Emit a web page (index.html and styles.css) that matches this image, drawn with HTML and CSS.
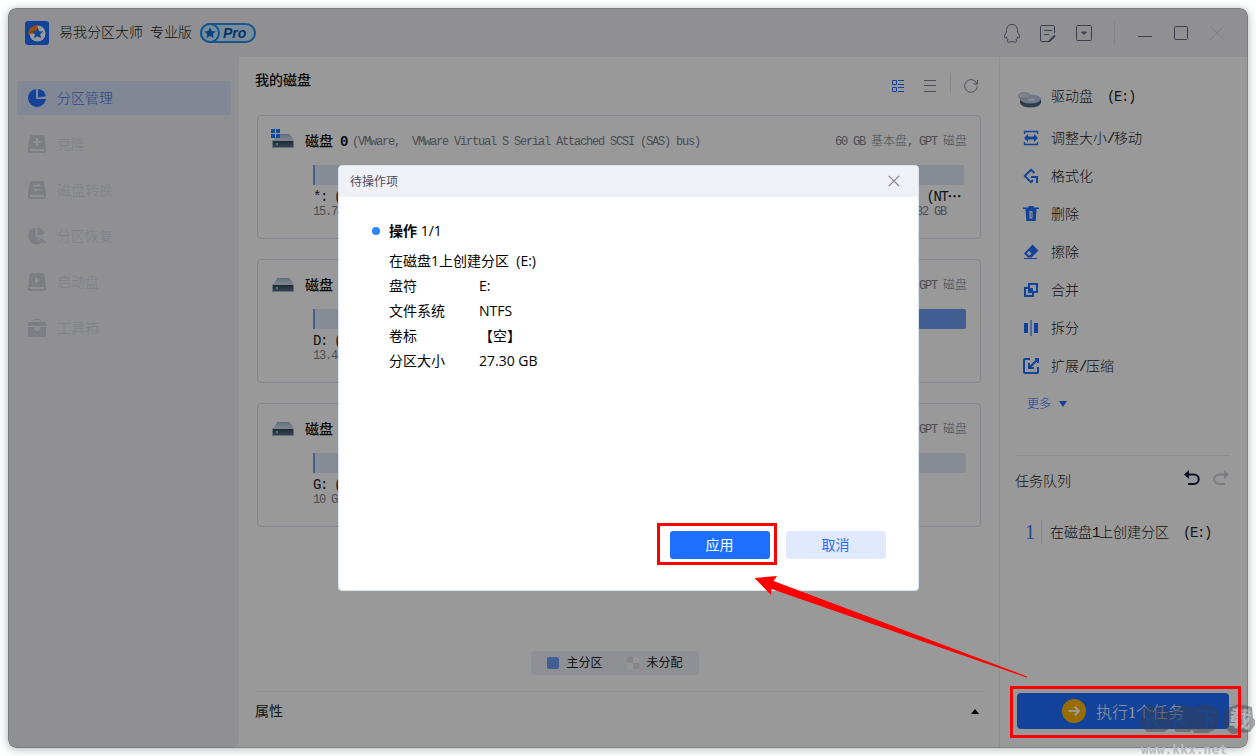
FILE: index.html
```html
<!DOCTYPE html>
<html lang="zh-CN">
	<head>
		<meta charset="utf-8">
		<title>易我分区大师</title>
		<meta name="viewport" content="width=device-width">
		<link rel="stylesheet" href="styles.css">
	</head>
	<body>
		<svg class="defs" width="0" height="0">
			<defs>
				<linearGradient id="lid" x1="0" y1="0" x2="0" y2="1">
					<stop offset="0" stop-color="#9fb4d0"/>
					<stop offset="1" stop-color="#d9e5f7"/>
				</linearGradient>
				<linearGradient id="box" x1="0" y1="0" x2="0" y2="1">
					<stop offset="0" stop-color="#34455c"/>
					<stop offset="1" stop-color="#5c6f8b"/>
				</linearGradient>
				<symbol id="drive" viewBox="0 0 24 22">
					<path d="M6.500 6h12l4.500 6.500H2z" fill="url(#lid)"/>
					<path d="M1 12.500h22V20H1z" fill="#a9b8cf"/>
					<path d="M2 13h20v6H2z" fill="url(#box)"/>
					<path d="M5 15h2v2H5z" fill="#7be07b"/>
				</symbol>
			</defs>
		</svg>

		<div class="window">
			<header class="titlebar">
				<svg class="logo" width="24" height="24" viewBox="0 0 24 24">
					<rect width="24" height="24" rx="3" fill="#1e6fff"/>
					<circle cx="12.500" cy="12.500" r="8" fill="#fff"/>
					<path d="M3 13a9.500 9.500 0 0 1 9.500-9v5L9 12.500z" fill="#ff7f00"/>
					<path d="M12.500 6.500l1.700 3.700 4 .4-3 2.700.9 4-3.600-2.100L9 17.300l.9-4-3-2.700 4-.4z" fill="#1e6fff"/>
				</svg>
				<h1>易我分区大师<i class="gap"></i>专业版</h1>
				<div class="pro">
					<svg width="20" height="20" viewBox="0 0 20 20">
						<circle cx="10" cy="10" r="9" fill="#c9eaff" stroke="#178cf5" stroke-width="2"/>
						<path d="M10 4.300l1.700 3.600 4 .5-2.900 2.700.7 3.900L10 13.100 6.500 15l.7-3.900-2.900-2.700 4-.5z" fill="#0a6fd6"/>
					</svg>
					<span>Pro</span>
				</div>
				<div class="tools">
					<svg width="24" height="24" viewBox="0 0 24 24">
						<path d="M12 3.500c-3.500 0-5.500 2.500-5.500 6v1.500c-1.300 1.800-2.200 3.700-2 5.700.8.300 1.400-.1 2-.7.300 1.200.8 2 1.500 2.800-1 .7-1 2.200.5 2.200h2c.8 0 1.200-.4 1.500-1 .3.600.7 1 1.500 1h2c1.500 0 1.500-1.500.5-2.200.7-.8 1.200-1.600 1.500-2.800.6.600 1.200 1 2 .7.200-2-.7-3.900-2-5.700V9.500c0-3.500-2-6-5.500-6z"/>
					</svg>
					<svg width="24" height="24" viewBox="0 0 24 24">
						<path d="M18.500 12V5.500a1 1 0 0 0-1-1h-12a1 1 0 0 0-1 1v14a1 1 0 0 0 1 1H13M8 9.500h8M8 13.500h5"/>
						<path d="M13 20.500l6-6" stroke-width="2"/>
					</svg>
					<svg width="24" height="24" viewBox="0 0 24 24">
						<rect x="4.500" y="4.500" width="15" height="15" rx="1"/>
						<path d="M9.500 11h5L12 13.500z" fill="#666a80"/>
					</svg>
					<span class="line"></span>
					<svg width="24" height="24" viewBox="0 0 24 24"><path d="M5 15.500h14"/></svg>
					<svg width="24" height="24" viewBox="0 0 24 24"><rect x="5.500" y="5.500" width="13" height="13" rx="1"/></svg>
					<svg class="off" width="24" height="24" viewBox="0 0 24 24"><path d="M5 5l14 14M19 5L5 19"/></svg>
				</div>
			</header>

			<div class="body">
				<nav class="sidebar">
					<a class="item active">
						<svg width="18" height="18" viewBox="0 0 18 18">
							<path d="M8 0v10h10A9 9 0 1 1 8 0z"/>
							<path d="M10 0a9 9 0 0 1 8 7.300L10 8.500z"/>
						</svg>分区管理
					</a>
					<a class="item">
						<svg width="18" height="18" viewBox="0 0 18 18">
							<path d="M3.500 0h11q1.500 0 1.700 1.500L18 13v3q0 2-2 2H2q-2 0-2-2v-3L1.800 1.500Q2 0 3.500 0z"/>
							<path class="cut" d="M8 3h2v3h3v2h-3v3H8V8H5V6h3zM2 14h14v2H2z"/>
						</svg>克隆
					</a>
					<a class="item">
						<svg width="18" height="18" viewBox="0 0 18 18">
							<path d="M3.500 0h11q1.500 0 1.700 1.500L18 13v3q0 2-2 2H2q-2 0-2-2v-3L1.800 1.500Q2 0 3.500 0z"/>
							<path class="cut" d="M5 4h5V2l3.500 3.500H5zM13 9.500H8.500v2L5 8h8zM2 14h14v2H2z"/>
						</svg>磁盘转换
					</a>
					<a class="item">
						<svg width="19" height="18" viewBox="0 0 19 18">
							<path d="M8 0v10h4l-2 3 3 4A9 9 0 1 1 8 0z"/>
							<path d="M10 0a9 9 0 0 1 7.500 6.500L10 8.500zM11 14l4-4v2.500q3.500.5 4 5-1.500-2-4-2V18z"/>
						</svg>分区恢复
					</a>
					<a class="item">
						<svg width="18" height="18" viewBox="0 0 18 18">
							<path d="M3.500 0h11q1.500 0 1.700 1.500L18 13v3q0 2-2 2H2q-2 0-2-2v-3L1.800 1.500Q2 0 3.500 0z"/>
							<path class="cut" d="M7 4l5 3-5 3.500zM2 14h14v2H2z"/>
						</svg>启动盘
					</a>
					<a class="item">
						<svg width="18" height="18" viewBox="0 0 18 18">
							<path d="M5 3V1.500Q5 0 6.500 0h5Q13 0 13 1.500V3h3.500Q18 3 18 4.500V7H0V4.500Q0 3 1.500 3zM6 3h6V1H6z" fill-rule="evenodd"/>
							<path d="M0 8h6q0 4 3 4t3-4h6v8.500q0 1.500-1.500 1.500h-15Q0 18 0 16.500z"/>
						</svg>工具箱
					</a>
				</nav>

				<main class="content">
					<div class="heading">
						<h2>我的磁盘</h2>
						<div class="views">
							<svg class="on" width="12" height="12" viewBox="0 0 12 12"><path d="M.5.500h4v4h-4zM.5 7.500h4v4h-4zM6 .500h6M6 4.500h6M6 7.500h6M6 11.500h6"/></svg>
							<svg width="12" height="12" viewBox="0 0 12 12"><path d="M0 .500h12M0 5.500h12M0 11.500h12"/></svg>
							<span class="line"></span>
							<svg width="14" height="14" viewBox="0 0 14 14"><path d="M12.800 4.500A6.300 6.300 0 1 0 13.300 7M13.500 1v4H9.500"/></svg>
						</div>
					</div>

					<section class="disk">
						<div class="disk-head">
							<svg class="drive" width="24" height="22"><use href="#drive"/><path d="M0 1h4v4H0zM5 1h4v4H5zM0 6h4v4H0zM5 6h4v4H5z" fill="#1e7bff"/></svg>
							<b>磁盘<i class="gap"></i><span class="mono">0</span></b>
							<span class="mono small model">(VMware,&nbsp; VMware Virtual S Serial Attached SCSI (SAS) bus)</span>
							<span class="meta"><span class="mono small">60 GB </span>基本盘<span class="mono small">, GPT </span>磁盘</span>
						</div>
						<div class="parts">
							<div class="part first">
								<div class="bar"></div>
								<p class="mono">*: (其他)</p>
								<p class="mono small size">15.74 MB</p>
							</div>
							<div class="part last">
								<div class="bar"></div>
								<p class="mono">(NT<b>⋯</b></p>
								<p class="mono small size">32 GB</p>
							</div>
						</div>
					</section>

					<section class="disk">
						<div class="disk-head">
							<svg class="drive" width="24" height="22"><use href="#drive"/></svg>
							<b>磁盘<i class="gap"></i><span class="mono">1</span></b>
							<span class="meta"><span class="mono small">GPT </span>磁盘</span>
						</div>
						<div class="parts wide">
							<div class="part first">
								<div class="bar"></div>
								<p class="mono">D: (NTFS)</p>
								<p class="mono small size">13.43 GB</p>
							</div>
							<div class="part last">
								<div class="bar used"></div>
							</div>
						</div>
					</section>

					<section class="disk">
						<div class="disk-head">
							<svg class="drive" width="24" height="22"><use href="#drive"/></svg>
							<b>磁盘<i class="gap"></i><span class="mono">2</span></b>
							<span class="meta"><span class="mono small">GPT </span>磁盘</span>
						</div>
						<div class="parts wide">
							<div class="part first">
								<div class="bar"></div>
								<p class="mono">G: (NTFS)</p>
								<p class="mono small size">10 GB</p>
							</div>
							<div class="part last">
								<div class="bar"></div>
							</div>
						</div>
					</section>

					<div class="legend">
						<i class="swatch primary"></i><span>主分区</span>
						<i class="swatch free"></i><span>未分配</span>
					</div>
					<footer class="props">
						<span>属性</span>
						<svg width="8" height="5" viewBox="0 0 8 5"><path d="M4 0l4 5H0z"/></svg>
					</footer>
				</main>

				<aside class="panel">
					<div class="target">
						<svg width="24" height="16" viewBox="0 0 24 16">
							<path d="M2 6v5q2 4.500 10.500 4.500T23 11V6z" fill="url(#box)"/>
							<ellipse cx="12.500" cy="7" rx="10.500" ry="4.500" fill="#b7c8e0"/>
							<ellipse cx="13" cy="7.500" rx="4" ry="1.500" fill="#d9e5f7"/>
							<path d="M0 4q1-3.500 6-3.500t6 3V6H1z" fill="#d5dbe6" stroke="#9aa4b5" stroke-width=".6"/>
						</svg>
						<span>驱动盘<span class="mono">&nbsp; (E:)</span></span>
					</div>
					<ul class="actions">
						<li>
							<svg width="16" height="16" viewBox="0 0 16 16"><path d="M1.500 4V1.500h13V4M1.500 12v2.500h13V12" class="thin"/><path class="fill" d="M1 8l4-4v2.500h6V4l4 4-4 4V9.500H5V12z"/></svg><span>调整大小<span class="mono">/</span>移动</span>
						</li>
						<li>
							<svg width="16" height="16" viewBox="0 0 16 16"><path d="M11.500 5L8 1.800 1.800 8 8 14.200 10 12.200M14 15V9H8"/></svg>格式化
						</li>
						<li>
							<svg width="16" height="16" viewBox="0 0 16 16"><path class="fill" fill-rule="evenodd" d="M5 1.500Q5 0 6.500 0h3Q11 0 11 1.500h5V3h-2.500l-.8 12H3.300L2.500 3H0V1.500zM6.500 5v7.500h3V5zM7.700 6.200h.8v5h-.8z"/></svg>删除
						</li>
						<li>
							<svg width="16" height="16" viewBox="0 0 16 16"><path class="fill" fill-rule="evenodd" d="M9.500.500l6 6-7 7H5L1 9.500zM6 7L3.800 9.300l2.500 2.500L8.600 9.500zM1 14h13v1H1z"/></svg>擦除
						</li>
						<li>
							<svg width="16" height="16" viewBox="0 0 16 16"><path d="M6 2h8v8H6zM10 10V14H2V6h4"/><path class="fill" d="M6 6h4v4H6z"/></svg>合并
						</li>
						<li>
							<svg width="16" height="16" viewBox="0 0 16 16"><path d="M2 4h2v8H2zM12 4h2v8h-2z"/><path d="M8 0v16" opacity=".55" stroke-width="2"/></svg>拆分
						</li>
						<li>
							<svg width="16" height="16" viewBox="0 0 16 16"><path d="M7 1H2Q1 1 1 2v12q0 1 1 1h12q1 0 1-1V9M15 5V1h-3M14 2L6.500 9.500M6 5v5h5"/></svg><span>扩展<span class="mono">/</span>压缩</span>
						</li>
					</ul>
					<div class="more">更多<svg width="8" height="6" viewBox="0 0 8 6"><path d="M0 0h8L4 6z"/></svg></div>
					<div class="queue">
						<h3>任务队列</h3>
						<svg class="undo" width="16" height="16" viewBox="0 0 16 16"><path d="M3 4.500h7a4.700 4.700 0 0 1 0 9.500H4" /><path class="head" d="M0 4.500L5 0v9z"/></svg>
						<svg class="redo" width="16" height="16" viewBox="0 0 16 16"><path d="M13 4.500H6A4.700 4.700 0 0 0 6 14h6" /><path class="head" d="M16 4.500L11 0v9z"/></svg>
					</div>
					<div class="task">
						<span class="num">1</span>
						<span class="desc">在磁盘<span class="mono">1</span>上创建分区<span class="mono">&nbsp; (E:)</span></span>
					</div>
					<button class="run" type="button">
						<svg width="24" height="24" viewBox="0 0 24 24"><circle cx="12" cy="12" r="12" fill="#ffb500"/><path d="M6.500 12H17M12.500 7.500L17 12l-4.500 4.500" fill="none" stroke="#fff" stroke-width="2"/></svg>
						<span>执行<span class="one">1</span>个任务</span>
					</button>
				</aside>
			</div>
			<div class="mask"></div>
		</div>

		<div class="dialog">
			<div class="dialog-head">
				<span>待操作项</span>
				<svg width="12" height="12" viewBox="0 0 12 12"><path d="M.8.800l10.400 10.400M11.200.800L.8 11.200"/></svg>
			</div>
			<div class="dialog-body">
				<h4>操作 <span>1/1</span></h4>
				<p>在磁盘1上创建分区&nbsp; (E:)</p>
				<dl>
					<dt>盘符</dt><dd>E:</dd>
					<dt>文件系统</dt><dd>NTFS</dd>
					<dt>卷标</dt><dd>【空】</dd>
					<dt>分区大小</dt><dd>27.30 GB</dd>
				</dl>
			</div>
			<div class="dialog-foot">
				<button class="ok" type="button">应用</button>
				<button class="cancel" type="button">取消</button>
			</div>
		</div>

		<div class="watermark">
			<svg width="116" height="34" viewBox="0 0 116 34">
				<path d="M2 10l9-7 8 4 4-3 9 6 1 15-8 5H8l-7-8zM33 9l10-6 12 3 3 16-7 8H37l-6-10zM52 6l16-4 12 6-1 18-10 5H55l-5-9zM86 7l14-5 13 3 1 11 4 4-7 10-18 2-9-8z"/>
			</svg>
			<div class="letters"><i>K</i><i>K</i><i>下</i><b>载</b></div>
			<span>www.kkx.net</span>
		</div>
		<div class="mark mark-apply"></div>
		<div class="mark mark-run"></div>
		<svg class="arrow" width="276" height="104" viewBox="0 0 276 104"><path d="M.500 3L23 1l-3.500 5 253.500 95.500-.5 1L17.500 14l-.5 6z"/></svg>
	</body>
</html>
```

FILE: styles.css
```css
* {
	box-sizing: border-box;
}

body {
	margin: 0;
	width: 1256px;
	height: 756px;
	padding: 8px;
	overflow: hidden;
	position: relative;
	background: #fdfefe;
	color: #333;
	font-family: "Liberation Sans", "Noto Sans CJK SC", sans-serif;
	font-size: 14px;
	line-height: 18px;
}

h1, h2, h3, h4, p, ul, dl, dd {
	margin: 0;
	padding: 0;
}

svg {
	display: block;
	flex: none;
}

.defs {
	position: absolute;
}

/* half-width latin next to full-width characters */
.mono {
	font-family: "Liberation Mono", "Noto Sans CJK SC", monospace;
	font-size: 14px;
	letter-spacing: -1.4px;
	white-space: pre;
}

.mono.small {
	font-size: 12px;
	letter-spacing: -1.2px;
}

.gap {
	display: inline-block;
	width: 7px;
}

.window {
	position: relative;
	display: flex;
	flex-direction: column;
	width: 1240px;
	height: 740px;
	background: #f0f1f5;
	border-radius: 8px;
	overflow: hidden;
	box-shadow: 0 1px 8px rgba(0, 0, 0, 0.3);
}

.mask {
	position: absolute;
	top: 0;
	left: 0;
	width: 100%;
	height: 100%;
	background: rgba(0, 0, 0, 0.4);
	border: 1px solid rgba(80, 84, 92, 0.35);
	border-radius: 8px;
}

/* title bar */
.titlebar {
	display: flex;
	align-items: center;
	height: 49px;
	padding: 1px 19px 0 17px;
}

.titlebar h1 {
	margin: -2px 9px 0 10px;
	font-size: 14px;
	font-weight: 300;
	color: #222;
	width: 132px;
	white-space: nowrap;
}

.pro {
	display: flex;
	align-items: center;
	width: 56px;
	height: 20px;
	border: 2px solid #2d8cf0;
	border-radius: 10px;
	background: #c9eaff;
}

.pro svg {
	margin-left: -2px;
}

.pro span {
	margin-left: 3px;
	font-family: "Liberation Sans", sans-serif;
	font-size: 14px;
	font-style: italic;
	font-weight: bold;
	line-height: 16px;
	color: #0a55b5;
}

.tools {
	display: flex;
	align-items: center;
	gap: 12px;
	margin-left: auto;
}

.tools svg {
	fill: none;
	stroke: #666a80;
}

.tools .off {
	opacity: 0.15;
}

.tools .line {
	width: 1px;
	height: 24px;
	margin: 0 6px;
	background: #d7deee;
}

.body {
	display: flex;
	flex: 1;
	min-height: 0;
	background: #fff;
}

/* left menu */
.sidebar {
	display: flex;
	flex-direction: column;
	gap: 12px;
	width: 231px;
	padding: 24px 8px 0 9px;
	background: #f0f1f5;
	border-bottom-right-radius: 8px;
}

.item {
	display: flex;
	align-items: center;
	gap: 11px;
	height: 34px;
	padding-left: 11px;
	border-radius: 4px;
	font-weight: 300;
	color: #d3d7e3;
}

.item svg {
	width: 18px;
	fill: #d0d1dd;
}

.item .cut {
	fill: #f0f1f5;
}

.item.active {
	background: #d7e2f9;
	color: #4a79e8;
}

.item.active svg {
	fill: #1e6fff;
}

/* disks */
.content {
	display: flex;
	flex-direction: column;
	width: 760px;
	padding: 0 18px;
}

.heading {
	display: flex;
	height: 58px;
	padding-top: 14px;
	margin-left: -2px;
}

.heading h2 {
	font-size: 14px;
	font-weight: 500;
	color: #111;
}

.views {
	display: flex;
	align-items: center;
	gap: 20px;
	height: 30px;
	margin-left: auto;
	padding-right: 3px;
}

.views svg {
	fill: none;
	stroke: #7c8090;
}

.views .on {
	stroke: #1e6fff;
}

.views .line {
	width: 1px;
	height: 20px;
	margin: -6px -7px 0 -6px;
	background: #e4e7ee;
}

.disk {
	height: 124px;
	margin-bottom: 20px;
	border: 1px solid #dbe1ec;
	border-radius: 4px;
}

.disk-head {
	display: flex;
	align-items: center;
	height: 49px;
	padding: 2px 13px 0;
}

.disk-head .drive {
	margin-top: -6px;
}

.disk-head b {
	margin: 0 5px 0 10px;
	font-weight: 500;
	color: #111;
}

.disk-head b .mono {
	font-weight: bold;
}

.model,
.meta {
	color: #7d8289;
}

.meta {
	margin-left: auto;
	font-size: 12px;
	font-weight: 300;
}

.parts {
	display: flex;
	justify-content: space-between;
	width: 651px;
	margin-left: 55px;
	color: #222;
}

.parts.wide {
	width: 653px;
}

.parts p {
	line-height: 16px;
}

.parts .mono:not(.small) {
	margin-top: 4px;
}

.parts p.size {
	line-height: 14px;
	color: #7d8289;
}

.bar {
	height: 20px;
	background: #e1e8f8;
}

.first {
	width: 300px;
}

.first .bar {
	border-left: 2px solid #6d9ef5;
}

.last {
	width: 300px;
	text-align: right;
}

.last p {
	padding-right: 4px;
}

.last p.size {
	padding-right: 18px;
}

.last .bar {
	border-radius: 0 2px 2px 0;
}

.bar.used {
	background: #6d9ef5;
}

.legend {
	display: flex;
	align-items: center;
	align-self: center;
	width: 168px;
	height: 24px;
	margin: auto 0 16px -9px;
	padding-left: 16px;
	border-radius: 4px;
	background: #eef1f5;
	font-size: 12px;
	color: #222;
}

.legend span {
	flex: none;
	width: 60px;
}

.legend span:last-child {
	width: 36px;
}

.swatch {
	flex: none;
	width: 12px;
	height: 12px;
	margin-right: 8px;
	border-radius: 2px;
}

.swatch.primary {
	background: #6d9ef5;
}

.swatch.free {
	background: conic-gradient(#fafafa 25%, #e0e0e0 0 50%, #fafafa 0 75%, #e0e0e0 0);
}

.props {
	display: flex;
	align-items: center;
	justify-content: space-between;
	height: 57px;
	margin: 0 -2px;
	padding: 0 4px 18px 0;
	border-top: 1px solid #ececef;
	color: #222;
}

/* operations */
.panel {
	flex: 1;
	display: flex;
	flex-direction: column;
	padding: 30px 18px 0 15px;
	border-left: 1px solid #eceef2;
	font-weight: 300;
	color: #222;
}

.target {
	display: flex;
	height: 18px;
	gap: 9px;
	padding-left: 3px;
}

.target svg {
	margin-top: 5px;
}

.actions {
	margin-top: 14px;
	list-style: none;
}

.actions li {
	display: flex;
	align-items: center;
	gap: 12px;
	height: 38px;
	padding-left: 8px;
}

.actions svg {
	fill: none;
	stroke: #1e6fff;
	stroke-width: 2;
}

.actions .thin {
	stroke-width: 1.3;
}

.actions .fill {
	fill: #1e6fff;
	stroke: none;
}

.more {
	display: flex;
	align-items: center;
	gap: 8px;
	height: 18px;
	margin-top: 10px;
	padding-left: 12px;
	font-size: 12px;
	color: #1e6fff;
}

.more svg {
	fill: #1e6fff;
}

.queue {
	display: flex;
	align-items: center;
	height: 50px;
	margin-top: 42px;
	border-top: 1px solid #ececef;
}

.queue h3 {
	flex: 1;
	font-size: 14px;
	font-weight: 300;
}

.queue svg {
	margin: -6px 1px 0 12px;
	fill: none;
	stroke: #101a3c;
	stroke-width: 2;
}

.queue .head {
	fill: #101a3c;
	stroke: none;
}

.queue .redo {
	opacity: 0.2;
}

.task {
	display: flex;
	align-items: center;
	height: 24px;
	margin-top: 15px;
}

.task .num {
	width: 27px;
	padding-left: 10px;
	border-right: 1px solid #e4e7ee;
	font-family: "Liberation Serif", serif;
	font-size: 20px;
	line-height: 24px;
	color: #3d7df5;
}

.task .desc {
	margin-left: 8px;
	white-space: nowrap;
}

.run {
	display: flex;
	align-items: center;
	gap: 10px;
	width: 212px;
	height: 36px;
	margin: auto 0 19px 2px;
	padding: 0 0 0 45px;
	border: 0;
	border-radius: 4px;
	background: #1e6fff;
	color: #fff;
	font-family: inherit;
	font-size: 16px;
	font-weight: 300;
}

.run .one {
	font-family: "Liberation Serif", serif;
}

/* pending operations dialog */
.dialog {
	position: absolute;
	top: 165px;
	left: 338px;
	display: flex;
	flex-direction: column;
	width: 581px;
	height: 426px;
	border: 1px solid #dbe3f2;
	border-radius: 4px;
	background: #fff;
	color: #000;
	font-family: "Open Sans", "Noto Sans CJK SC", sans-serif;
}

.dialog-head {
	display: flex;
	align-items: center;
	justify-content: space-between;
	height: 31px;
	padding: 0 18px 0 11px;
	border-radius: 3px 3px 0 0;
	background: #f0f1f6;
	color: #4c4f5a;
	font-size: 12px;
}

.dialog-head svg {
	margin-top: -1px;
	stroke: #7c8097;
	stroke-width: 1.2;
}

.dialog-body {
	flex: 1;
	padding: 24px 50px 0;
}

.dialog h4 {
	position: relative;
	margin-bottom: 7px;
	font-size: 14px;
	font-weight: 700;
	line-height: 20px;
}

.dialog h4:before {
	content: "";
	position: absolute;
	top: 6px;
	left: -17px;
	width: 8px;
	height: 8px;
	border-radius: 50%;
	background: #2d86ff;
}

.dialog h4 span {
	font-weight: 400;
}

.dialog p,
.dialog dl {
	line-height: 25px;
}

.dialog dl {
	display: grid;
	grid-template-columns: 90px 1fr;
}

.dialog-foot {
	display: flex;
	justify-content: flex-end;
	gap: 16px;
	padding: 0 32px 31px;
}

.dialog-foot button {
	width: 100px;
	height: 28px;
	padding: 0 1px 2px 0;
	border: 0;
	border-radius: 3px;
	font-family: inherit;
	font-size: 14px;
	font-weight: 400;
}

.ok {
	background: #1e6fff;
	color: #fff;
}

.cancel {
	background: #e1e9fc;
	color: #1e6fff;
}

/* callouts drawn over the window */
.mark {
	position: absolute;
	border: 3px solid #fe0000;
}

.mark-apply {
	top: 523px;
	left: 657px;
	width: 120px;
	height: 42px;
}

.mark-run {
	top: 686px;
	left: 1010px;
	width: 231px;
	height: 52px;
}

.arrow {
	position: absolute;
	top: 575px;
	left: 754px;
	fill: #fe0000;
}

.watermark {
	position: absolute;
	top: 702px;
	left: 1139px;
	width: 117px;
	height: 54px;
}

.watermark svg {
	fill: rgba(60, 62, 70, 0.45);
}

.letters {
	position: absolute;
	top: 6px;
	left: 6px;
	display: grid;
	grid-template-columns: 27px 24px 33px 24px;
	font-size: 22px;
	font-weight: bold;
	line-height: 24px;
	color: rgba(190, 193, 200, 0.8);
}

.letters i {
	font-style: normal;
	color: rgba(30, 80, 165, 0.35);
}

.letters b {
	transform: rotate(8deg);
}

.watermark > span {
	position: absolute;
	top: 40px;
	left: 2px;
	font-family: "DejaVu Sans Mono", monospace;
	font-size: 13px;
	font-weight: bold;
	line-height: 15px;
	color: #b9bbbf;
}
```
